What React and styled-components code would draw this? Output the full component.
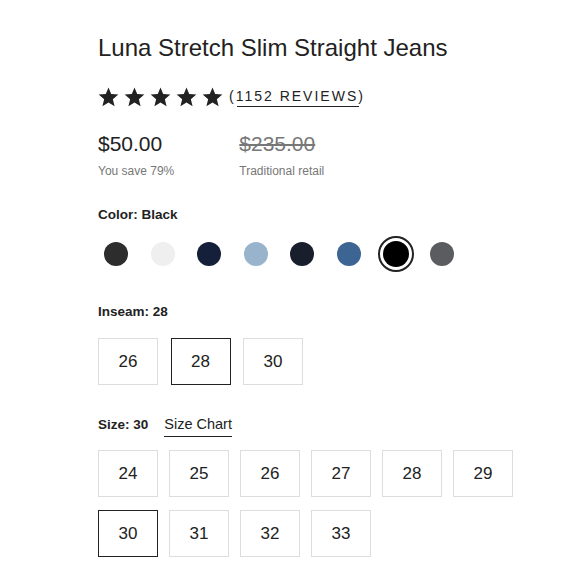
import React from 'react';
import styled, { createGlobalStyle } from 'styled-components';

const GlobalStyle = createGlobalStyle`
  body {
    margin: 0;
    background: #fff;
    font-family: 'Liberation Sans', Arial, sans-serif;
    color: #222;
  }
`;

const Page = styled.div`
  padding: 33px 0 0 98px;
  width: 482px;
  box-sizing: border-box;
`;

const Title = styled.h1`
  margin: 0;
  font-size: 24px;
  font-weight: 400;
  line-height: 30px;
  color: #222;
`;

const RatingRow = styled.div`
  margin-top: 24px;
  display: flex;
  align-items: center;
  gap: 6px;
`;

const Stars = styled.div`
  display: flex;
  gap: 5px;
`;

const Reviews = styled.a`
  font-size: 14px;
  letter-spacing: 2px;
  color: #222;
  text-decoration: none;
  position: relative;
  padding-bottom: 3px;
  &::after {
    content: '';
    position: absolute;
    left: 8px;
    right: 6px;
    bottom: 0;
    border-bottom: 1px solid #222;
  }
`;

const PriceRow = styled.div`
  margin-top: 24px;
  display: flex;
  gap: 65px;
`;

const PriceBlock = styled.div`
  display: flex;
  flex-direction: column;
`;

const Price = styled.span`
  font-size: 21px;
  line-height: 26px;
  color: ${p => (p.$old ? '#777' : '#222')};
  text-decoration: ${p => (p.$old ? 'line-through' : 'none')};
`;

const Note = styled.span`
  margin-top: 7px;
  font-size: 12px;
  color: #777;
`;

const Label = styled.div`
  font-size: 13.5px;
  font-weight: 700;
  color: #222;
  display: flex;
  align-items: baseline;
  gap: 16px;
`;

const Section = styled.div`
  margin-top: ${p => p.$top}px;
`;

const Swatches = styled.div`
  margin-top: 14px;
  display: flex;
  gap: 10.6px;
`;

const Swatch = styled.span`
  width: 36px;
  height: 36px;
  display: flex;
  align-items: center;
  justify-content: center;
  border-radius: 50%;
  border: 2px solid ${p => (p.$active ? '#222' : 'transparent')};
  box-sizing: border-box;
  &::before {
    content: '';
    width: ${p => (p.$active ? 26 : 24)}px;
    height: ${p => (p.$active ? 26 : 24)}px;
    border-radius: 50%;
    background: ${p => p.$color};
  }
`;

const Options = styled.div`
  margin-top: ${p => p.$top}px;
  display: grid;
  grid-template-columns: repeat(6, 60px);
  column-gap: ${p => p.$gap}px;
  row-gap: 13px;
`;

const Option = styled.button`
  height: 47px;
  background: #fff;
  border: ${p => (p.$active ? '1.5px solid #222' : '1.5px solid #ddd')};
  font-family: inherit;
  font-size: 17px;
  color: #222;
  padding: 0;
`;

const SizeChart = styled.a`
  font-weight: 400;
  font-size: 14.5px;
  color: #222;
  text-decoration: none;
  border-bottom: 1px solid #222;
  padding-bottom: 4px;
`;

const Star = () => (
  <svg width="21" height="20" viewBox="0 0 24 23">
    <path
      d="M12 0.5l3.1 7.6 8.2.6-6.3 5.3 2 8-7-4.3-7 4.3 2-8L0.7 8.7l8.2-.6z"
      fill="#222"
    />
  </svg>
);

const colors = ['#2d2d2d', '#efefef', '#14203a', '#98b4cd', '#191e2d', '#3d6594', '#000', '#5a5c5f'];

export default function App() {
  return (
    <Page>
      <GlobalStyle />
      <Title>Luna Stretch Slim Straight Jeans</Title>
      <RatingRow>
        <Stars>
          {[0, 1, 2, 3, 4].map(i => (
            <Star key={i} />
          ))}
        </Stars>
        <Reviews href="#">(1152 REVIEWS)</Reviews>
      </RatingRow>
      <PriceRow>
        <PriceBlock>
          <Price>$50.00</Price>
          <Note>You save 79%</Note>
        </PriceBlock>
        <PriceBlock>
          <Price $old>$235.00</Price>
          <Note>Traditional retail</Note>
        </PriceBlock>
      </PriceRow>
      <Section $top={29}>
        <Label>Color: Black</Label>
        <Swatches>
          {colors.map((c, i) => (
            <Swatch key={c + i} $color={c} $active={i === 6} />
          ))}
        </Swatches>
      </Section>
      <Section $top={32}>
        <Label>Inseam: 28</Label>
        <Options $top={19} $gap={12.5}>
          {['26', '28', '30'].map(v => (
            <Option key={v} $active={v === '28'}>
              {v}
            </Option>
          ))}
        </Options>
      </Section>
      <Section $top={31}>
        <Label>
          Size: 30 <SizeChart href="#">Size Chart</SizeChart>
        </Label>
        <Options $top={13} $gap={11}>
          {['24', '25', '26', '27', '28', '29', '30', '31', '32', '33'].map(v => (
            <Option key={v} $active={v === '30'}>
              {v}
            </Option>
          ))}
        </Options>
      </Section>
    </Page>
  );
}
